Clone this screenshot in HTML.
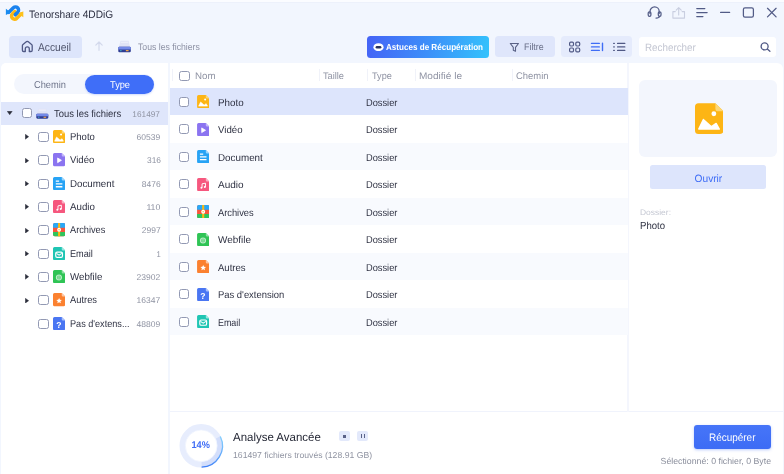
<!DOCTYPE html>
<html><head><meta charset="utf-8"><title>Tenorshare 4DDiG</title>
<style>
*{box-sizing:border-box;margin:0;padding:0}
html,body{width:784px;height:474px;overflow:hidden}
body{background:#f2f6fe;font-family:"Liberation Sans",sans-serif;color:#2a2d3a;position:relative;font-size:10px}
.abs{position:absolute}
.t{position:absolute;white-space:nowrap;line-height:1}
.cb{position:absolute;border:1.100px solid #9299b3;border-radius:2.500px;background:#fff}
.panel{position:absolute;background:#fff}
#root{position:absolute;left:0;top:0;width:784px;height:474px;will-change:transform;background:#f2f6fe}
</style></head><body><div id="root">
<div class="abs" style="left:0;top:0;width:784px;height:1.500px;background:#fbfcff"></div><div class="abs" style="left:0;top:1.500px;width:784px;height:1px;background:#edf1fb"></div>
<svg class="abs" style="left:0;top:0" width="32" height="26" viewBox="0 0 32 26" fill="none" stroke-width="3.500" stroke-linecap="round">
 <path d="M8.800 12.300 L13.360 7.760 A3.100 3.100 0 0 1 17.740 12.140 L15.300 14.600" stroke="#1a82ee"/><path d="M5.900 8.800 V15.100 L10.800 12.400 Z" fill="#1a8cf0"/>
 <path d="M21.300 13.800 L16.740 18.340 A3.100 3.100 0 0 1 12.360 13.960 L14.750 11.550" stroke="#fdb813"/><path d="M23.300 11.300 V17.300 L18.600 13.900 Z" fill="#fdc21c"/>
 <path d="M16.900 13 L15.300 14.600" stroke="#1a82ee"/>
</svg>
<div class="t" style="top:8.60px;font-size:10.8px;color:#2b2e40;left:29.10px;transform-origin:0 80%;transform:rotate(0.03deg) scaleX(0.9415);">Tenorshare 4DDiG</div>
<svg class="abs" style="left:640px;top:0" width="144" height="26" viewBox="640 0 144 26" fill="none" stroke="#525b86" stroke-width="1.250" stroke-linecap="round" stroke-linejoin="round">
 <path d="M650 13.500 V11.500 a4.600 4.600 0 0 1 9.200 0 V13.500"/>
 <rect x="648.200" y="11.800" width="2.700" height="4.600" rx="1.300"/>
 <rect x="658.300" y="11.800" width="2.700" height="4.600" rx="1.300"/>
 <path d="M659.600 16.400 q-0.400 1.700 -3.600 1.700" stroke-width="1.200"/>
 <g stroke="#c9cee0" stroke-width="1.100"><path d="M675.300 11.600 h-2.400 v6.500 h11.600 v-6.500 h-2.400"/><path d="M678.700 15 V7.800 M676.200 10.200 l2.500 -2.500 l2.500 2.500"/></g>
 <path d="M696.800 8.600 h8 M696.800 12.600 h10.300 M696.800 16.600 h6.100" stroke-width="1.300"/>
 <path d="M720.600 12.400 h9"/>
 <rect x="743.400" y="7.900" width="10" height="9.200" rx="1.600"/>
 <path d="M767.500 8.300 l8.600 8.600 M776.100 8.300 l-8.600 8.600"/>
</svg>
<div class="abs" style="left:9.200px;top:35.900px;width:73.100px;height:21.700px;border-radius:3.500px;background:#dde5fb"></div>
<svg class="abs" style="left:20px;top:39px" width="15" height="15" viewBox="20 39 15 15" fill="none" stroke="#505985" stroke-width="1.300" stroke-linejoin="round" stroke-linecap="round"><path d="M22.400 45.800 Q22.400 45 23 44.500 L26.600 41.600 Q27.300 41.100 28 41.600 L31.600 44.500 Q32.200 45 32.200 45.800 V50.300 Q32.200 51.500 31 51.500 H29.300 V48.800 a2 2 0 0 0 -4 0 V51.500 H23.600 Q22.400 51.500 22.400 50.300 Z"/></svg>
<div class="t" style="top:42.00px;font-size:11.3px;color:#4f546c;left:38.00px;transform-origin:0 80%;transform:rotate(0.03deg) scaleX(0.9058);">Accueil</div>
<svg class="abs" style="left:93px;top:39px" width="12" height="14" viewBox="93 39 12 14" fill="none" stroke="#d3d9ec" stroke-width="1.200" stroke-linecap="round" stroke-linejoin="round"><path d="M99 50.300 V42 M95.800 45.200 L99 42 L102.200 45.200"/></svg>
<svg class="abs" style="left:117.500px;top:40.400px" width="13.100" height="12.600" viewBox="0 0 14 13" preserveAspectRatio="none"><path d="M2.600 0.800 h8.800 l1.400 6.300 h-11.600 z" fill="#e0e3f6"/><path d="M3.200 1.800 h7.600 l0.300 1.400 h-8.200 z" fill="#eceefa"/><rect x="0.300" y="6.900" width="13.400" height="5.700" rx="1.300" fill="#2f3d93"/><path d="M0.300 9.700 V8.200 a1.300 1.300 0 0 1 1.300 -1.300 H12.400 a1.300 1.300 0 0 1 1.300 1.300 V9.700 Z" fill="#7389e8"/><rect x="8.400" y="10.300" width="2.900" height="1.300" fill="#f0a64a"/><rect x="2.400" y="10.300" width="1.300" height="1.300" fill="#3fb6c9"/></svg>
<div class="t" style="top:42.05px;font-size:9.4px;color:#8d91a4;left:137.90px;transform-origin:0 80%;transform:rotate(0.03deg) scaleX(0.9271);">Tous les fichiers</div>
<div class="abs" style="left:366.800px;top:35.700px;width:122.700px;height:22px;border-radius:3.500px;background:linear-gradient(100deg,#4563f6 0%,#3d8ff9 50%,#34c3fc 100%)"></div>
<svg class="abs" style="left:372.500px;top:42.500px" width="11" height="8.400" viewBox="0 0 11 8.400"><ellipse cx="5.500" cy="4.200" rx="5.100" ry="4" fill="#fff"/><rect x="2.600" y="2.900" width="5.800" height="2.600" rx="1.300" fill="#27315f"/></svg>
<div class="t" style="top:43.20px;font-size:8.9px;color:#fff;font-weight:bold;left:386.40px;transform-origin:0 80%;transform:rotate(0.03deg) scaleX(0.9108);">Astuces de Récupération</div>
<div class="abs" style="left:494.800px;top:35.700px;width:60.600px;height:21.700px;border-radius:3.500px;background:#dfe6fb"></div>
<svg class="abs" style="left:509px;top:41.500px" width="11" height="11" viewBox="509 41.500 11 11" fill="none" stroke="#5a6286" stroke-width="1.100" stroke-linejoin="round"><path d="M510.300 43 H518.500 L515.500 46.900 V50.800 L513.300 49.700 V46.900 Z"/></svg>
<div class="t" style="top:42.10px;font-size:9.6px;color:#6a708a;left:524.40px;transform-origin:0 80%;transform:rotate(0.03deg) scaleX(0.9235);">Filtre</div>
<div class="abs" style="left:561.200px;top:35.700px;width:71.300px;height:21.700px;border-radius:3.500px;background:#e5ebfc"></div>
<svg class="abs" style="left:566px;top:40px" width="64" height="14" viewBox="566 40 64 14" fill="none" stroke="#505985" stroke-width="1.200">
 <rect x="569.600" y="42.100" width="3.900" height="3.900" rx="1.200"/><rect x="575.800" y="42.100" width="3.900" height="3.900" rx="1.200"/><rect x="569.600" y="48" width="3.900" height="3.900" rx="1.200"/><rect x="575.800" y="48" width="3.900" height="3.900" rx="1.200"/>
 <g stroke="#3f6df6" stroke-width="1.400" stroke-linecap="round"><path d="M591.500 43.400 h7.800 M591.500 46.900 h7.800 M591.500 50.400 h7.800 M602.500 43.300 v7.200"/></g>
 <g stroke-linecap="round" stroke-width="1.300"><path d="M617.600 43.400 h7.200 M617.600 46.900 h7.200 M617.600 50.400 h7.200 M613.700 43.400 h0.600 M613.700 46.900 h0.600 M613.700 50.400 h0.600"/></g>
</svg>
<div class="abs" style="left:639.200px;top:36.500px;width:137.300px;height:20.500px;border-radius:3px;background:#fff"></div>
<svg class="abs" style="left:759px;top:41px" width="13" height="13" viewBox="759 41 13 13" fill="none" stroke="#505985" stroke-width="1.300" stroke-linecap="round"><circle cx="764.600" cy="46.400" r="3.500"/><path d="M767.300 49.100 L769.900 51.300"/></svg>
<div class="t" style="top:41.60px;font-size:10.6px;color:#c3c6d2;left:644.70px;transform-origin:0 80%;transform:rotate(0.03deg) scaleX(0.9272);">Rechercher</div>
<div class="panel" style="left:0.500px;top:63px;width:167.500px;height:411px;border-radius:5px 0 0 0"></div>
<div class="panel" style="left:169.500px;top:63px;width:458px;height:348px"></div>
<div class="panel" style="left:628.500px;top:63px;width:154.500px;height:348px;border-radius:0 6px 0 0"></div>
<div class="panel" style="left:169.500px;top:412px;width:613.500px;height:62px"></div>
<div class="abs" style="left:169.500px;top:411px;width:613.500px;height:1px;background:#f0f3fc"></div>
<div class="abs" style="left:627px;top:63px;width:2px;height:349px;background:#f4f6fd"></div>
<div class="abs" style="left:14.300px;top:74.200px;width:139.300px;height:20.300px;border-radius:10.300px;background:#f3f6fd"></div>
<div class="abs" style="left:84.600px;top:74.800px;width:69px;height:19.100px;border-radius:9.600px;background:#3f6ef8;box-shadow:0 1px 2px rgba(63,110,248,.250)"></div>
<div class="t" style="top:80.10px;font-size:10px;color:#70768c;left:33.60px;transform-origin:0 80%;transform:rotate(0.03deg) scaleX(0.9286);">Chemin</div>
<div class="t" style="top:80.10px;font-size:10px;color:#fff;left:109.50px;transform-origin:0 80%;transform:rotate(0.03deg) scaleX(0.9225);">Type</div>
<div class="abs" style="left:0.500px;top:101.600px;width:167.500px;height:23px;background:#dfe6fb"></div>
<svg class="abs" style="left:7.400px;top:111.30px" width="5.400" height="4"><path d="M0.200 0.300 H5.200 L2.700 3.800 Z" fill="#2a2d3a" stroke="#2a2d3a" stroke-width="0.400" stroke-linejoin="round"/></svg>
<div class="cb" style="left:21.8px;top:108.20px;width:10.2px;height:10.2px"></div>
<svg class="abs" style="left:36.200px;top:107.90px" width="12.600" height="11" viewBox="0 0 14 13" preserveAspectRatio="none"><path d="M2.600 0.800 h8.800 l1.400 6.300 h-11.600 z" fill="#e0e3f6"/><path d="M3.200 1.800 h7.600 l0.300 1.400 h-8.200 z" fill="#eceefa"/><rect x="0.300" y="6.900" width="13.400" height="5.700" rx="1.300" fill="#2f3d93"/><path d="M0.300 9.700 V8.200 a1.300 1.300 0 0 1 1.300 -1.300 H12.400 a1.300 1.300 0 0 1 1.300 1.300 V9.700 Z" fill="#7389e8"/><rect x="8.400" y="10.300" width="2.900" height="1.300" fill="#f0a64a"/><rect x="2.400" y="10.300" width="1.300" height="1.300" fill="#3fb6c9"/></svg>
<div class="t" style="top:109.00px;font-size:10.2px;color:#2e3142;left:53.80px;transform-origin:0 80%;transform:rotate(0.03deg) scaleX(0.9261);">Tous les fichiers</div>
<div class="t" style="top:110.00px;font-size:8.4px;color:#8f93a2;right:623.80px;transform-origin:100% 80%;transform:rotate(0.03deg) scaleX(0.9882);">161497</div>
<svg class="abs" style="left:24.500px;top:134.30px" width="4" height="5.400"><path d="M0.300 0.200 L3.700 2.700 L0.300 5.200 Z" fill="#2a2d3a" stroke="#2a2d3a" stroke-width="0.400" stroke-linejoin="round"/></svg>
<div class="cb" style="left:38.4px;top:131.90px;width:10.2px;height:10.2px"></div>
<svg class="abs" style="left:53.00px;top:130.10px;width:12.2px;height:13.3px" viewBox="0 0 13 14"><path d="M1.600 0 H9.300 L13 3.700 V12.400 a1.600 1.600 0 0 1 -1.600 1.600 H1.600 a1.600 1.600 0 0 1 -1.600 -1.600 V1.600 a1.600 1.600 0 0 1 1.600 -1.600 Z" fill="#fdb515"/><path d="M9.300 0 L13 3.700 H10.600 a1.300 1.300 0 0 1 -1.300 -1.300 Z" fill="#fed773"/><circle cx="8.600" cy="4.800" r="1.100" fill="#fff"/><path d="M1.700 11.800 L3.800 7.400 L7.500 10.700 L9.650 9.200 L11.100 11.800 Z" fill="#fff" stroke="#fff" stroke-width="0.600" stroke-linejoin="round"/></svg>
<div class="t" style="top:132.00px;font-size:10px;color:#2e3142;left:70.30px;transform-origin:0 80%;transform:rotate(0.03deg) scaleX(0.9491);">Photo</div>
<div class="t" style="top:133.00px;font-size:8.4px;color:#8f93a2;right:623.50px;transform-origin:100% 80%;transform:rotate(0.03deg) scaleX(1.0167);">60539</div>
<svg class="abs" style="left:24.500px;top:157.63px" width="4" height="5.400"><path d="M0.300 0.200 L3.700 2.700 L0.300 5.200 Z" fill="#2a2d3a" stroke="#2a2d3a" stroke-width="0.400" stroke-linejoin="round"/></svg>
<div class="cb" style="left:38.4px;top:155.23px;width:10.2px;height:10.2px"></div>
<svg class="abs" style="left:53.00px;top:153.43px;width:12.2px;height:13.3px" viewBox="0 0 13 14"><path d="M1.600 0 H9.300 L13 3.700 V12.400 a1.600 1.600 0 0 1 -1.600 1.600 H1.600 a1.600 1.600 0 0 1 -1.600 -1.600 V1.600 a1.600 1.600 0 0 1 1.600 -1.600 Z" fill="#8b74f0"/><path d="M9.300 0 L13 3.700 H10.600 a1.300 1.300 0 0 1 -1.300 -1.300 Z" fill="#c3b7fb"/><path d="M4.900 5.200 L9 7.700 L4.900 10.200 Z" fill="#fff" stroke="#fff" stroke-width="0.800" stroke-linejoin="round"/></svg>
<div class="t" style="top:155.33px;font-size:10px;color:#2e3142;left:70.30px;transform-origin:0 80%;transform:rotate(0.03deg) scaleX(0.9567);">Vidéo</div>
<div class="t" style="top:156.33px;font-size:8.4px;color:#8f93a2;right:623.50px;transform-origin:100% 80%;transform:rotate(0.03deg) scaleX(0.9999);">316</div>
<svg class="abs" style="left:24.500px;top:180.96px" width="4" height="5.400"><path d="M0.300 0.200 L3.700 2.700 L0.300 5.200 Z" fill="#2a2d3a" stroke="#2a2d3a" stroke-width="0.400" stroke-linejoin="round"/></svg>
<div class="cb" style="left:38.4px;top:178.56px;width:10.2px;height:10.2px"></div>
<svg class="abs" style="left:53.00px;top:176.76px;width:12.2px;height:13.3px" viewBox="0 0 13 14"><path d="M1.600 0 H9.300 L13 3.700 V12.400 a1.600 1.600 0 0 1 -1.600 1.600 H1.600 a1.600 1.600 0 0 1 -1.600 -1.600 V1.600 a1.600 1.600 0 0 1 1.600 -1.600 Z" fill="#27a3f5"/><path d="M9.300 0 L13 3.700 H10.600 a1.300 1.300 0 0 1 -1.300 -1.300 Z" fill="#9bd6fc"/><path d="M3 4.300 h3.500 M3 7.300 h7 M3 10.300 h7" stroke="#fff" stroke-width="1.400"/></svg>
<div class="t" style="top:178.66px;font-size:10px;color:#2e3142;left:70.30px;transform-origin:0 80%;transform:rotate(0.03deg) scaleX(0.9741);">Document</div>
<div class="t" style="top:179.66px;font-size:8.4px;color:#8f93a2;right:623.50px;transform-origin:100% 80%;transform:rotate(0.03deg) scaleX(1.0102);">8476</div>
<svg class="abs" style="left:24.500px;top:204.29px" width="4" height="5.400"><path d="M0.300 0.200 L3.700 2.700 L0.300 5.200 Z" fill="#2a2d3a" stroke="#2a2d3a" stroke-width="0.400" stroke-linejoin="round"/></svg>
<div class="cb" style="left:38.4px;top:201.89px;width:10.2px;height:10.2px"></div>
<svg class="abs" style="left:53.00px;top:200.09px;width:12.2px;height:13.3px" viewBox="0 0 13 14"><path d="M1.600 0 H9.300 L13 3.700 V12.400 a1.600 1.600 0 0 1 -1.600 1.600 H1.600 a1.600 1.600 0 0 1 -1.600 -1.600 V1.600 a1.600 1.600 0 0 1 1.600 -1.600 Z" fill="#f6577e"/><path d="M9.300 0 L13 3.700 H10.600 a1.300 1.300 0 0 1 -1.300 -1.300 Z" fill="#fbb0c3"/><path d="M5.300 10.300 V6.200 L8.900 5.500 V9.600" fill="none" stroke="#fff" stroke-width="1"/><circle cx="4.600" cy="10.300" r="1.050" fill="#fff"/><circle cx="8.200" cy="9.600" r="1.050" fill="#fff"/></svg>
<div class="t" style="top:201.99px;font-size:10px;color:#2e3142;left:70.30px;transform-origin:0 80%;transform:rotate(0.03deg) scaleX(0.9734);">Audio</div>
<div class="t" style="top:202.99px;font-size:8.4px;color:#8f93a2;right:623.50px;transform-origin:100% 80%;transform:rotate(0.03deg) scaleX(1.0463);">110</div>
<svg class="abs" style="left:24.500px;top:227.62px" width="4" height="5.400"><path d="M0.300 0.200 L3.700 2.700 L0.300 5.200 Z" fill="#2a2d3a" stroke="#2a2d3a" stroke-width="0.400" stroke-linejoin="round"/></svg>
<div class="cb" style="left:38.4px;top:225.22px;width:10.2px;height:10.2px"></div>
<svg class="abs" style="left:53.00px;top:223.42px;width:12.2px;height:13.3px" viewBox="0 0 13 14"><rect width="13" height="14" rx="1.800" fill="#f9563b"/><path d="M0 5.100 V1.800 a1.800 1.800 0 0 1 1.800 -1.800 H11.200 a1.800 1.800 0 0 1 1.800 1.800 V5.100 Z" fill="#29a8f7"/><path d="M0 9.500 V12.200 a1.800 1.800 0 0 0 1.800 1.800 H11.200 a1.800 1.800 0 0 0 1.800 -1.800 V9.500 Z" fill="#2fc45c"/><rect x="5.400" y="0" width="2.200" height="14" fill="#fdb812"/><circle cx="6.500" cy="7.200" r="2.100" fill="#fff"/><rect x="5.600" y="6.700" width="1.800" height="1" rx="0.500" fill="#fdb812"/></svg>
<div class="t" style="top:225.32px;font-size:10px;color:#2e3142;left:70.30px;transform-origin:0 80%;transform:rotate(0.03deg) scaleX(0.9205);">Archives</div>
<div class="t" style="top:226.32px;font-size:8.4px;color:#8f93a2;right:623.50px;transform-origin:100% 80%;transform:rotate(0.03deg) scaleX(1.0102);">2997</div>
<svg class="abs" style="left:24.500px;top:250.95px" width="4" height="5.400"><path d="M0.300 0.200 L3.700 2.700 L0.300 5.200 Z" fill="#2a2d3a" stroke="#2a2d3a" stroke-width="0.400" stroke-linejoin="round"/></svg>
<div class="cb" style="left:38.4px;top:248.55px;width:10.2px;height:10.2px"></div>
<svg class="abs" style="left:53.00px;top:246.75px;width:12.2px;height:13.3px" viewBox="0 0 13 14"><path d="M1.600 0 H9.300 L13 3.700 V12.400 a1.600 1.600 0 0 1 -1.600 1.600 H1.600 a1.600 1.600 0 0 1 -1.600 -1.600 V1.600 a1.600 1.600 0 0 1 1.600 -1.600 Z" fill="#1fc5b3"/><path d="M9.300 0 L13 3.700 H10.600 a1.300 1.300 0 0 1 -1.300 -1.300 Z" fill="#9ae9e0"/><rect x="2.900" y="5.300" width="7.200" height="5.600" rx="1.400" fill="none" stroke="#fff" stroke-width="1.250"/><path d="M3.600 6.700 L6.500 8.700 L9.400 6.700" fill="none" stroke="#fff" stroke-width="1.100"/></svg>
<div class="t" style="top:248.65px;font-size:10px;color:#2e3142;left:70.30px;transform-origin:0 80%;transform:rotate(0.03deg) scaleX(0.9156);">Email</div>
<div class="t" style="top:249.65px;font-size:8.4px;color:#8f93a2;right:623.50px;transform-origin:100% 80%;transform:rotate(0.03deg) scaleX(0.9143);">1</div>
<svg class="abs" style="left:24.500px;top:274.28px" width="4" height="5.400"><path d="M0.300 0.200 L3.700 2.700 L0.300 5.200 Z" fill="#2a2d3a" stroke="#2a2d3a" stroke-width="0.400" stroke-linejoin="round"/></svg>
<div class="cb" style="left:38.4px;top:271.88px;width:10.2px;height:10.2px"></div>
<svg class="abs" style="left:53.00px;top:270.08px;width:12.2px;height:13.3px" viewBox="0 0 13 14"><path d="M1.600 0 H9.300 L13 3.700 V12.400 a1.600 1.600 0 0 1 -1.600 1.600 H1.600 a1.600 1.600 0 0 1 -1.600 -1.600 V1.600 a1.600 1.600 0 0 1 1.600 -1.600 Z" fill="#2fc455"/><path d="M9.300 0 L13 3.700 H10.600 a1.300 1.300 0 0 1 -1.300 -1.300 Z" fill="#8fe0a5"/><circle cx="6.300" cy="7.900" r="3.200" fill="#fff" fill-opacity="0.750"/><path d="M4.300 6.700 h4 M4 7.900 h4.600 M4.300 9.100 h4" stroke="#2fc455" stroke-width="0.600" stroke-opacity="0.800"/><ellipse cx="6.300" cy="7.900" rx="1.300" ry="3" fill="none" stroke="#2fc455" stroke-width="0.500" stroke-opacity="0.600"/></svg>
<div class="t" style="top:271.98px;font-size:10px;color:#2e3142;left:70.30px;transform-origin:0 80%;transform:rotate(0.03deg) scaleX(0.9741);">Webfile</div>
<div class="t" style="top:272.98px;font-size:8.4px;color:#8f93a2;right:623.50px;transform-origin:100% 80%;transform:rotate(0.03deg) scaleX(1.0167);">23902</div>
<svg class="abs" style="left:24.500px;top:297.61px" width="4" height="5.400"><path d="M0.300 0.200 L3.700 2.700 L0.300 5.200 Z" fill="#2a2d3a" stroke="#2a2d3a" stroke-width="0.400" stroke-linejoin="round"/></svg>
<div class="cb" style="left:38.4px;top:295.21px;width:10.2px;height:10.2px"></div>
<svg class="abs" style="left:53.00px;top:293.41px;width:12.2px;height:13.3px" viewBox="0 0 13 14"><path d="M1.600 0 H9.300 L13 3.700 V12.400 a1.600 1.600 0 0 1 -1.600 1.600 H1.600 a1.600 1.600 0 0 1 -1.600 -1.600 V1.600 a1.600 1.600 0 0 1 1.600 -1.600 Z" fill="#fb8130"/><path d="M9.300 0 L13 3.700 H10.600 a1.300 1.300 0 0 1 -1.300 -1.300 Z" fill="#fdc9a8"/><path d="M6.500 5.200 L7.400 7.200 L9.500 7.400 L7.900 8.800 L8.400 10.900 L6.500 9.800 L4.600 10.900 L5.100 8.800 L3.500 7.400 L5.600 7.200 Z" fill="#fff"/></svg>
<div class="t" style="top:295.31px;font-size:10px;color:#2e3142;left:70.30px;transform-origin:0 80%;transform:rotate(0.03deg) scaleX(0.9343);">Autres</div>
<div class="t" style="top:296.31px;font-size:8.4px;color:#8f93a2;right:623.50px;transform-origin:100% 80%;transform:rotate(0.03deg) scaleX(1.0167);">16347</div>
<div class="cb" style="left:38.4px;top:318.54px;width:10.2px;height:10.2px"></div>
<svg class="abs" style="left:53.00px;top:316.74px;width:12.2px;height:13.3px" viewBox="0 0 13 14"><path d="M1.600 0 H9.300 L13 3.700 V12.400 a1.600 1.600 0 0 1 -1.600 1.600 H1.600 a1.600 1.600 0 0 1 -1.600 -1.600 V1.600 a1.600 1.600 0 0 1 1.600 -1.600 Z" fill="#4a76f2"/><path d="M9.300 0 L13 3.700 H10.600 a1.300 1.300 0 0 1 -1.300 -1.300 Z" fill="#adc2fb"/><text x="6.300" y="11.400" font-size="9.200" font-weight="bold" fill="#fff" text-anchor="middle" font-family="Liberation Sans,sans-serif">?</text></svg>
<div class="t" style="top:318.64px;font-size:10px;color:#2e3142;left:70.30px;transform-origin:0 80%;transform:rotate(0.03deg) scaleX(0.9115);">Pas d'extens...</div>
<div class="t" style="top:319.64px;font-size:8.4px;color:#8f93a2;right:623.50px;transform-origin:100% 80%;transform:rotate(0.03deg) scaleX(1.0167);">48809</div>
<div class="cb" style="left:179.4px;top:70.80px;width:10.2px;height:10.2px"></div>
<div class="t" style="top:70.90px;font-size:9.6px;color:#9094a4;left:195.30px;transform-origin:0 80%;transform:rotate(0.03deg) scaleX(1.0165);">Nom</div>
<div class="t" style="top:70.90px;font-size:9.6px;color:#9094a4;left:323.40px;transform-origin:0 80%;transform:rotate(0.03deg) scaleX(0.9599);">Taille</div>
<div class="t" style="top:70.90px;font-size:9.6px;color:#9094a4;left:371.50px;transform-origin:0 80%;transform:rotate(0.03deg) scaleX(0.9513);">Type</div>
<div class="t" style="top:70.90px;font-size:9.6px;color:#9094a4;left:419.40px;transform-origin:0 80%;transform:rotate(0.03deg) scaleX(1.0465);">Modifié le</div>
<div class="t" style="top:70.90px;font-size:9.6px;color:#9094a4;left:515.70px;transform-origin:0 80%;transform:rotate(0.03deg) scaleX(0.9824);">Chemin</div>
<div class="abs" style="left:172px;top:69px;width:1px;height:12px;background:#f0f2f9"></div>
<div class="abs" style="left:318.9px;top:69px;width:1px;height:12px;background:#f0f2f9"></div>
<div class="abs" style="left:367.4px;top:69px;width:1px;height:12px;background:#f0f2f9"></div>
<div class="abs" style="left:415.2px;top:69px;width:1px;height:12px;background:#f0f2f9"></div>
<div class="abs" style="left:511.5px;top:69px;width:1px;height:12px;background:#f0f2f9"></div>
<div class="abs" style="left:169.500px;width:458px;top:87.90px;height:27.5px;background:#dde5fc"></div>
<div class="cb" style="left:179px;top:96.75px;width:10.2px;height:10.2px"></div>
<svg class="abs" style="left:197.00px;top:95.05px;width:12.4px;height:13.2px" viewBox="0 0 13 14"><path d="M1.600 0 H9.300 L13 3.700 V12.400 a1.600 1.600 0 0 1 -1.600 1.600 H1.600 a1.600 1.600 0 0 1 -1.600 -1.600 V1.600 a1.600 1.600 0 0 1 1.600 -1.600 Z" fill="#fdb515"/><path d="M9.300 0 L13 3.700 H10.600 a1.300 1.300 0 0 1 -1.300 -1.300 Z" fill="#fed773"/><circle cx="8.600" cy="4.800" r="1.100" fill="#fff"/><path d="M1.700 11.800 L3.800 7.400 L7.500 10.700 L9.650 9.200 L11.100 11.800 Z" fill="#fff" stroke="#fff" stroke-width="0.600" stroke-linejoin="round"/></svg>
<div class="t" style="top:97.75px;font-size:10px;color:#2e3142;left:217.60px;transform-origin:0 80%;transform:rotate(0.03deg) scaleX(0.9797);">Photo</div>
<div class="t" style="top:97.75px;font-size:10px;color:#2e3142;left:366.30px;transform-origin:0 80%;transform:rotate(0.03deg) scaleX(0.9263);">Dossier</div>
<div class="abs" style="left:169.500px;width:458px;top:115.40px;height:27.5px;background:#fff"></div>
<div class="cb" style="left:179px;top:124.25px;width:10.2px;height:10.2px"></div>
<svg class="abs" style="left:197.00px;top:122.55px;width:12.4px;height:13.2px" viewBox="0 0 13 14"><path d="M1.600 0 H9.300 L13 3.700 V12.400 a1.600 1.600 0 0 1 -1.600 1.600 H1.600 a1.600 1.600 0 0 1 -1.600 -1.600 V1.600 a1.600 1.600 0 0 1 1.600 -1.600 Z" fill="#8b74f0"/><path d="M9.300 0 L13 3.700 H10.600 a1.300 1.300 0 0 1 -1.300 -1.300 Z" fill="#c3b7fb"/><path d="M4.900 5.200 L9 7.700 L4.900 10.200 Z" fill="#fff" stroke="#fff" stroke-width="0.800" stroke-linejoin="round"/></svg>
<div class="t" style="top:125.25px;font-size:10px;color:#2e3142;left:217.60px;transform-origin:0 80%;transform:rotate(0.03deg) scaleX(0.9646);">Vidéo</div>
<div class="t" style="top:125.25px;font-size:10px;color:#2e3142;left:366.30px;transform-origin:0 80%;transform:rotate(0.03deg) scaleX(0.9263);">Dossier</div>
<div class="abs" style="left:169.500px;width:458px;top:142.90px;height:27.5px;background:#f8fafe"></div>
<div class="cb" style="left:179px;top:151.75px;width:10.2px;height:10.2px"></div>
<svg class="abs" style="left:197.00px;top:150.05px;width:12.4px;height:13.2px" viewBox="0 0 13 14"><path d="M1.600 0 H9.300 L13 3.700 V12.400 a1.600 1.600 0 0 1 -1.600 1.600 H1.600 a1.600 1.600 0 0 1 -1.600 -1.600 V1.600 a1.600 1.600 0 0 1 1.600 -1.600 Z" fill="#27a3f5"/><path d="M9.300 0 L13 3.700 H10.600 a1.300 1.300 0 0 1 -1.300 -1.300 Z" fill="#9bd6fc"/><path d="M3 4.300 h3.500 M3 7.300 h7 M3 10.300 h7" stroke="#fff" stroke-width="1.400"/></svg>
<div class="t" style="top:152.75px;font-size:10px;color:#2e3142;left:217.60px;transform-origin:0 80%;transform:rotate(0.03deg) scaleX(0.9829);">Document</div>
<div class="t" style="top:152.75px;font-size:10px;color:#2e3142;left:366.30px;transform-origin:0 80%;transform:rotate(0.03deg) scaleX(0.9263);">Dossier</div>
<div class="abs" style="left:169.500px;width:458px;top:170.40px;height:27.5px;background:#fff"></div>
<div class="cb" style="left:179px;top:179.25px;width:10.2px;height:10.2px"></div>
<svg class="abs" style="left:197.00px;top:177.55px;width:12.4px;height:13.2px" viewBox="0 0 13 14"><path d="M1.600 0 H9.300 L13 3.700 V12.400 a1.600 1.600 0 0 1 -1.600 1.600 H1.600 a1.600 1.600 0 0 1 -1.600 -1.600 V1.600 a1.600 1.600 0 0 1 1.600 -1.600 Z" fill="#f6577e"/><path d="M9.300 0 L13 3.700 H10.600 a1.300 1.300 0 0 1 -1.300 -1.300 Z" fill="#fbb0c3"/><path d="M5.300 10.300 V6.200 L8.900 5.500 V9.600" fill="none" stroke="#fff" stroke-width="1"/><circle cx="4.600" cy="10.300" r="1.050" fill="#fff"/><circle cx="8.200" cy="9.600" r="1.050" fill="#fff"/></svg>
<div class="t" style="top:180.25px;font-size:10px;color:#2e3142;left:217.60px;transform-origin:0 80%;transform:rotate(0.03deg) scaleX(1.0008);">Audio</div>
<div class="t" style="top:180.25px;font-size:10px;color:#2e3142;left:366.30px;transform-origin:0 80%;transform:rotate(0.03deg) scaleX(0.9263);">Dossier</div>
<div class="abs" style="left:169.500px;width:458px;top:197.90px;height:27.5px;background:#f8fafe"></div>
<div class="cb" style="left:179px;top:206.75px;width:10.2px;height:10.2px"></div>
<svg class="abs" style="left:197.00px;top:205.05px;width:12.4px;height:13.2px" viewBox="0 0 13 14"><rect width="13" height="14" rx="1.800" fill="#f9563b"/><path d="M0 5.100 V1.800 a1.800 1.800 0 0 1 1.800 -1.800 H11.200 a1.800 1.800 0 0 1 1.800 1.800 V5.100 Z" fill="#29a8f7"/><path d="M0 9.500 V12.200 a1.800 1.800 0 0 0 1.800 1.800 H11.200 a1.800 1.800 0 0 0 1.800 -1.800 V9.500 Z" fill="#2fc45c"/><rect x="5.400" y="0" width="2.200" height="14" fill="#fdb812"/><circle cx="6.500" cy="7.200" r="2.100" fill="#fff"/><rect x="5.600" y="6.700" width="1.800" height="1" rx="0.500" fill="#fdb812"/></svg>
<div class="t" style="top:207.75px;font-size:10px;color:#2e3142;left:217.60px;transform-origin:0 80%;transform:rotate(0.03deg) scaleX(0.9283);">Archives</div>
<div class="t" style="top:207.75px;font-size:10px;color:#2e3142;left:366.30px;transform-origin:0 80%;transform:rotate(0.03deg) scaleX(0.9263);">Dossier</div>
<div class="abs" style="left:169.500px;width:458px;top:225.40px;height:27.5px;background:#fff"></div>
<div class="cb" style="left:179px;top:234.25px;width:10.2px;height:10.2px"></div>
<svg class="abs" style="left:197.00px;top:232.55px;width:12.4px;height:13.2px" viewBox="0 0 13 14"><path d="M1.600 0 H9.300 L13 3.700 V12.400 a1.600 1.600 0 0 1 -1.600 1.600 H1.600 a1.600 1.600 0 0 1 -1.600 -1.600 V1.600 a1.600 1.600 0 0 1 1.600 -1.600 Z" fill="#2fc455"/><path d="M9.300 0 L13 3.700 H10.600 a1.300 1.300 0 0 1 -1.300 -1.300 Z" fill="#8fe0a5"/><circle cx="6.300" cy="7.900" r="3.200" fill="#fff" fill-opacity="0.750"/><path d="M4.300 6.700 h4 M4 7.900 h4.600 M4.300 9.100 h4" stroke="#2fc455" stroke-width="0.600" stroke-opacity="0.800"/><ellipse cx="6.300" cy="7.900" rx="1.300" ry="3" fill="none" stroke="#2fc455" stroke-width="0.500" stroke-opacity="0.600"/></svg>
<div class="t" style="top:235.25px;font-size:10px;color:#2e3142;left:217.60px;transform-origin:0 80%;transform:rotate(0.03deg) scaleX(0.9922);">Webfile</div>
<div class="t" style="top:235.25px;font-size:10px;color:#2e3142;left:366.30px;transform-origin:0 80%;transform:rotate(0.03deg) scaleX(0.9263);">Dossier</div>
<div class="abs" style="left:169.500px;width:458px;top:252.90px;height:27.5px;background:#f8fafe"></div>
<div class="cb" style="left:179px;top:261.75px;width:10.2px;height:10.2px"></div>
<svg class="abs" style="left:197.00px;top:260.05px;width:12.4px;height:13.2px" viewBox="0 0 13 14"><path d="M1.600 0 H9.300 L13 3.700 V12.400 a1.600 1.600 0 0 1 -1.600 1.600 H1.600 a1.600 1.600 0 0 1 -1.600 -1.600 V1.600 a1.600 1.600 0 0 1 1.600 -1.600 Z" fill="#fb8130"/><path d="M9.300 0 L13 3.700 H10.600 a1.300 1.300 0 0 1 -1.300 -1.300 Z" fill="#fdc9a8"/><path d="M6.500 5.200 L7.400 7.200 L9.500 7.400 L7.900 8.800 L8.400 10.900 L6.500 9.800 L4.600 10.900 L5.100 8.800 L3.500 7.400 L5.600 7.200 Z" fill="#fff"/></svg>
<div class="t" style="top:262.75px;font-size:10px;color:#2e3142;left:217.60px;transform-origin:0 80%;transform:rotate(0.03deg) scaleX(0.9550);">Autres</div>
<div class="t" style="top:262.75px;font-size:10px;color:#2e3142;left:366.30px;transform-origin:0 80%;transform:rotate(0.03deg) scaleX(0.9263);">Dossier</div>
<div class="abs" style="left:169.500px;width:458px;top:280.40px;height:27.5px;background:#fff"></div>
<div class="cb" style="left:179px;top:289.25px;width:10.2px;height:10.2px"></div>
<svg class="abs" style="left:197.00px;top:287.55px;width:12.4px;height:13.2px" viewBox="0 0 13 14"><path d="M1.600 0 H9.300 L13 3.700 V12.400 a1.600 1.600 0 0 1 -1.600 1.600 H1.600 a1.600 1.600 0 0 1 -1.600 -1.600 V1.600 a1.600 1.600 0 0 1 1.600 -1.600 Z" fill="#4a76f2"/><path d="M9.300 0 L13 3.700 H10.600 a1.300 1.300 0 0 1 -1.300 -1.300 Z" fill="#adc2fb"/><text x="6.300" y="11.400" font-size="9.200" font-weight="bold" fill="#fff" text-anchor="middle" font-family="Liberation Sans,sans-serif">?</text></svg>
<div class="t" style="top:290.25px;font-size:10px;color:#2e3142;left:217.60px;transform-origin:0 80%;transform:rotate(0.03deg) scaleX(0.9418);">Pas d'extension</div>
<div class="t" style="top:290.25px;font-size:10px;color:#2e3142;left:366.30px;transform-origin:0 80%;transform:rotate(0.03deg) scaleX(0.9263);">Dossier</div>
<div class="abs" style="left:169.500px;width:458px;top:307.90px;height:27.5px;background:#f8fafe"></div>
<div class="cb" style="left:179px;top:316.75px;width:10.2px;height:10.2px"></div>
<svg class="abs" style="left:197.00px;top:315.05px;width:12.4px;height:13.2px" viewBox="0 0 13 14"><path d="M1.600 0 H9.300 L13 3.700 V12.400 a1.600 1.600 0 0 1 -1.600 1.600 H1.600 a1.600 1.600 0 0 1 -1.600 -1.600 V1.600 a1.600 1.600 0 0 1 1.600 -1.600 Z" fill="#1fc5b3"/><path d="M9.300 0 L13 3.700 H10.600 a1.300 1.300 0 0 1 -1.300 -1.300 Z" fill="#9ae9e0"/><rect x="2.900" y="5.300" width="7.200" height="5.600" rx="1.400" fill="none" stroke="#fff" stroke-width="1.250"/><path d="M3.600 6.700 L6.500 8.700 L9.400 6.700" fill="none" stroke="#fff" stroke-width="1.100"/></svg>
<div class="t" style="top:317.75px;font-size:10px;color:#2e3142;left:217.60px;transform-origin:0 80%;transform:rotate(0.03deg) scaleX(0.8916);">Email</div>
<div class="t" style="top:317.75px;font-size:10px;color:#2e3142;left:366.30px;transform-origin:0 80%;transform:rotate(0.03deg) scaleX(0.9263);">Dossier</div>
<div class="abs" style="left:639.200px;top:79.700px;width:137.500px;height:77px;border-radius:6px;background:#f3f6fd"></div>
<svg class="abs" style="left:694.80px;top:102.90px;width:28.5px;height:31.1px" viewBox="0 0 13 14"><path d="M1.600 0 H9.300 L13 3.700 V12.400 a1.600 1.600 0 0 1 -1.600 1.600 H1.600 a1.600 1.600 0 0 1 -1.600 -1.600 V1.600 a1.600 1.600 0 0 1 1.600 -1.600 Z" fill="#fdb515"/><path d="M9.300 0 L13 3.700 H10.600 a1.300 1.300 0 0 1 -1.300 -1.300 Z" fill="#fed773"/><circle cx="8.600" cy="4.800" r="1.100" fill="#fff"/><path d="M1.700 11.800 L3.800 7.400 L7.500 10.700 L9.650 9.200 L11.100 11.800 Z" fill="#fff" stroke="#fff" stroke-width="0.600" stroke-linejoin="round"/></svg>
<div class="abs" style="left:650.400px;top:165.200px;width:115.800px;height:23.900px;border-radius:2.500px;background:#dde5fc"></div>
<div class="t" style="top:172.60px;font-size:10.6px;color:#3f6df6;left:694.17px;transform-origin:50% 80%;transform:rotate(0.03deg) scaleX(0.9600);">Ouvrir</div>
<div class="t" style="top:208.80px;font-size:8.1px;color:#c4c7d2;left:639.80px;transform-origin:0 80%;transform:rotate(0.03deg) scaleX(1.0434);">Dossier:</div>
<div class="t" style="top:221.30px;font-size:10.2px;color:#2e3142;left:639.80px;transform-origin:0 80%;transform:rotate(0.03deg) scaleX(0.9417);">Photo</div>
<svg class="abs" style="left:174px;top:418px" width="56" height="56" viewBox="174 418 56 56" fill="none">
 <defs><linearGradient id="ag" gradientUnits="userSpaceOnUse" x1="222" y1="432" x2="203" y2="467"><stop offset="0" stop-color="#8fdcff"/><stop offset="1" stop-color="#3b7cf7"/></linearGradient>
 <filter id="bl" x="-20%" y="-20%" width="140%" height="140%"><feGaussianBlur stdDeviation="0.700"/></filter></defs>
 <circle cx="201.200" cy="445.800" r="18.600" stroke="#e7edfd" stroke-width="6.200" filter="url(#bl)"/>
 <path d="M217.900 437.600 A18.600 18.600 0 0 1 201.600 464.400" stroke="#d3defb" stroke-width="5.600"/>
 <circle cx="201.200" cy="445.800" r="15.900" fill="#fff" stroke="#edf2fe" stroke-width="0.800"/>
 <path d="M220.300 436.500 A21.300 21.300 0 0 1 201.600 467.100" stroke="url(#ag)" stroke-width="1.300"/>
</svg>
<div class="t" style="top:440.10px;font-size:9.7px;color:#3f6df6;font-weight:bold;left:191.20px;transform-origin:50% 80%;transform:rotate(0.03deg) scaleX(0.9480);">14%</div>
<div class="t" style="top:431.80px;font-size:11.8px;color:#1f2230;left:233.10px;transform-origin:0 80%;transform:rotate(0.03deg) scaleX(0.9721);">Analyse Avancée</div>
<div class="t" style="top:451.20px;font-size:8.6px;color:#9094a2;left:233.10px;transform-origin:0 80%;transform:rotate(0.03deg) scaleX(1.0075);">161497 fichiers trouvés (128.91 GB)</div>
<div class="abs" style="left:339.400px;top:431.200px;width:10.400px;height:10.100px;border-radius:2px;background:#e3e9fb"></div>
<div class="abs" style="left:342.900px;top:434.500px;width:3.200px;height:3.200px;background:#5a6288"></div>
<div class="abs" style="left:357.400px;top:431.200px;width:10.400px;height:10.100px;border-radius:2px;background:#e3e9fb"></div>
<div class="abs" style="left:360.600px;top:434.200px;width:1.100px;height:3.900px;background:#5a6288"></div>
<div class="abs" style="left:363.500px;top:434.200px;width:1.100px;height:3.900px;background:#5a6288"></div>
<div class="abs" style="left:693.800px;top:424.600px;width:77.200px;height:24.400px;border-radius:3px;background:linear-gradient(#4675f8,#3d6cf5);box-shadow:0 1px 3px rgba(63,109,246,.350)"></div>
<div class="t" style="top:431.80px;font-size:10.8px;color:#fff;left:707.29px;transform-origin:50% 80%;transform:rotate(0.03deg) scaleX(0.9222);">Récupérer</div>
<div class="t" style="top:457.00px;font-size:8.8px;color:#8a8e9c;right:13.20px;transform-origin:100% 80%;transform:rotate(0.03deg) scaleX(0.9951);">Sélectionné: 0 fichier, 0 Byte</div>
</div></body></html>
